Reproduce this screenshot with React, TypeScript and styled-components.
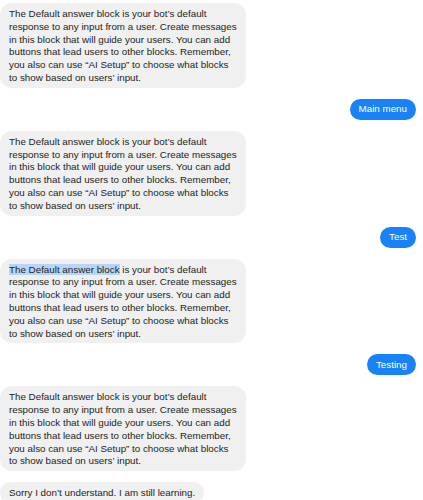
import React from "react";
import styled, { createGlobalStyle } from "styled-components";

const Global = createGlobalStyle`
  html, body { margin: 0; padding: 0; background: #ffffff; }
  body { font-family: "Liberation Sans", Arial, Helvetica, sans-serif; }
`;

const Thread = styled.div`
  display: flex;
  flex-direction: column;
  gap: 11px;
  padding: 3px 7px 0 0;
  width: 423px;
  box-sizing: border-box;
`;

const Row = styled.div<{ $mine?: boolean }>`
  display: flex;
  justify-content: ${(p) => (p.$mine ? "flex-end" : "flex-start")};
`;

const BotBubble = styled.div`
  background: #f0f0f0;
  color: #1c1e21;
  font-size: 9.8px;
  line-height: 12.8px;
  padding: 5px 9px 3px 9px;
  border-radius: 12px;
  white-space: nowrap;
`;

const BotLine = styled.div``;

const UserPill = styled.div`
  background: #1a82f7;
  color: #ffffff;
  font-size: 9.8px;
  line-height: 12px;
  padding: 4.5px 9px;
  border-radius: 11px;
`;

const Highlight = styled.span`
  background: #b8d5f7;
`;

const lines = [
  "response to any input from a user. Create messages",
  "in this block that will guide your users. You can add",
  "buttons that lead users to other blocks. Remember,",
  "you also can use \u201cAI Setup\u201d to choose what blocks",
  "to show based on users\u2019 input.",
];

function DefaultAnswer({ highlight }: { highlight?: boolean }) {
  return (
    <Row>
      <BotBubble>
        <BotLine>
          {highlight ? <Highlight>The Default answer block</Highlight> : "The Default answer block"}
          {" is your bot\u2019s default"}
        </BotLine>
        {lines.map((l) => (
          <BotLine key={l}>{l}</BotLine>
        ))}
      </BotBubble>
    </Row>
  );
}

function UserMessage({ text }: { text: string }) {
  return (
    <Row $mine>
      <UserPill>{text}</UserPill>
    </Row>
  );
}

export default function App() {
  return (
    <>
      <Global />
      <Thread>
        <DefaultAnswer />
        <UserMessage text="Main menu" />
        <DefaultAnswer />
        <UserMessage text="Test" />
        <DefaultAnswer highlight />
        <UserMessage text="Testing" />
        <DefaultAnswer />
        <Row>
          <BotBubble>
            <BotLine>Sorry I don’t understand. I am still learning.</BotLine>
          </BotBubble>
        </Row>
      </Thread>
    </>
  );
}
